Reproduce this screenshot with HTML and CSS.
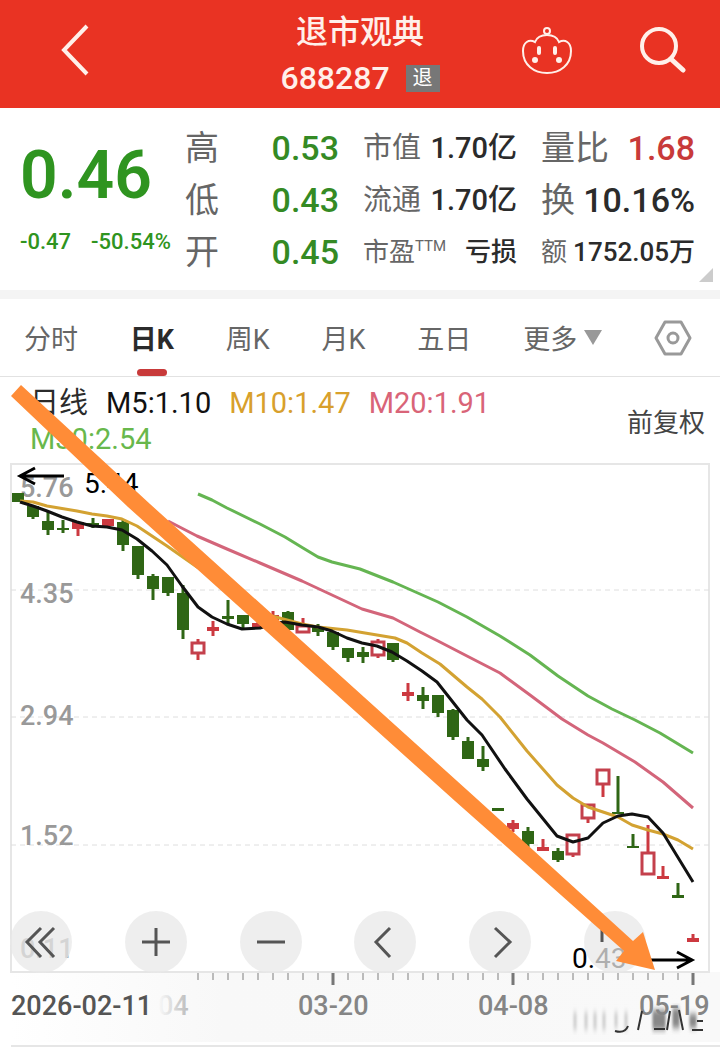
FILE: index.html
```
<!DOCTYPE html>
<html lang="zh-CN">
<head>
    <meta charset="UTF-8">
    <meta name="viewport" content="width=device-width, initial-scale=1.0">
    <title>退市观典 688287</title>
    <link rel="stylesheet" href="styles.css">
</head>
<body>
    <header class="topbar">
        <button class="icon-button back" aria-label="返回">
            <svg width="30" height="54" viewBox="0 0 30 54"><path d="M27 3 4 27l23 24" fill="none" stroke="#fff0ea" stroke-width="4"/></svg>
        </button>
        <div class="stock">
            <h1 class="stock-name">退市观典</h1>
            <div class="stock-code">688287 <span class="tag">退</span></div>
        </div>
        <div class="tools">
            <button class="icon-button" aria-label="助手">
                <svg width="52" height="50" viewBox="0 0 52 50" fill="none" stroke="#fff0ea" stroke-width="2">
                    <circle cx="27" cy="6" r="3"/>
                    <path d="M27 10c-6 0-10 2-12 7-6-3-12 0-12 9 0 14 11 22 24 22s24-8 24-22c0-9-6-12-12-9-2-5-6-7-12-7z"/>
                    <path d="M19 23v5M35 23v5" stroke-width="4" stroke-linecap="round"/>
                    <circle cx="15" cy="35" r="3" fill="#fff0ea" stroke="none"/>
                    <circle cx="39" cy="35" r="3" fill="#fff0ea" stroke="none"/>
                </svg>
            </button>
            <button class="icon-button" aria-label="搜索">
                <svg width="46" height="46" viewBox="0 0 46 46" fill="none" stroke="#fff0ea" stroke-width="4">
                    <circle cx="19" cy="19" r="17"/>
                    <path d="m31 32 12 11" stroke-width="5" stroke-linecap="round"/>
                </svg>
            </button>
        </div>
    </header>

    <section class="quote">
        <div class="price">
            <div class="price-now">0.46</div>
            <div class="price-change"><span>-0.47</span><span>-50.54%</span></div>
        </div>
        <dl class="stats">
            <div class="large"><dt>高</dt><dd class="down">0.53</dd></div>
            <div class="large"><dt>低</dt><dd class="down">0.43</dd></div>
            <div class="large"><dt>开</dt><dd class="down">0.45</dd></div>
            <div class="medium"><dt>市值</dt><dd>1.70亿</dd></div>
            <div class="medium"><dt>流通</dt><dd>1.70亿</dd></div>
            <div class="small"><dt>市盈<sup>TTM</sup></dt><dd>亏损</dd></div>
            <div class="large"><dt>量比</dt><dd class="up">1.68</dd></div>
            <div class="large"><dt>换</dt><dd>10.16%</dd></div>
            <div class="small"><dt>额</dt><dd>1752.05万</dd></div>
        </dl>
        <span class="corner"></span>
    </section>

    <nav class="tabs">
        <button class="tab">分时</button>
        <button class="tab active">日K</button>
        <button class="tab">周K</button>
        <button class="tab">月K</button>
        <button class="tab">五日</button>
        <button class="tab more">更多<span class="caret"></span></button>
        <button class="icon-button settings" aria-label="设置">
            <svg width="38" height="36" viewBox="0 0 38 36" fill="none" stroke="#999" stroke-width="3">
                <path d="M11 2h16l9 16-9 16H11L2 18z" stroke-linejoin="round"/>
                <circle cx="19" cy="18" r="5"/>
            </svg>
        </button>
    </nav>

    <main class="chart">
        <div class="legend">
            <div class="averages">
                <span>日线</span>
                <span class="m5">M5:1.10</span>
                <span class="m10">M10:1.47</span>
                <span class="m20">M20:1.91</span>
                <span class="m30">M30:2.54</span>
            </div>
            <button class="adjust">前复权</button>
        </div>

        <svg class="plot" viewBox="0 458 720 590">
            <defs>
                <linearGradient id="axisShade" x1="0" y1="0" x2="1" y2="0">
                    <stop offset="0" stop-color="#fff"/>
                    <stop offset="0.3" stop-color="#f8f8f8"/>
                    <stop offset="1" stop-color="#f9f9f9"/>
                </linearGradient>
                <linearGradient id="labelFade" x1="0" y1="0" x2="1" y2="0">
                    <stop offset="0" stop-color="#bbb" stop-opacity="0"/>
                    <stop offset="1" stop-color="#bbb"/>
                </linearGradient>
                <filter id="smear" x="-10%" y="-20%" width="120%" height="140%">
                    <feGaussianBlur stdDeviation="1 3"/>
                </filter>
            </defs>

            <rect x="11" y="972" width="709" height="70" fill="url(#axisShade)"/>
            <rect class="frame" x="11" y="464" width="698" height="508"/>
            <path class="grid" d="M11 590H709M11 717H709M11 845H709"/>
            <path class="frame" d="M11 1046H720"/>

            <g class="scale">
                <text x="20" y="497">5.76</text>
                <text x="20" y="603">4.35</text>
                <text x="20" y="725">2.94</text>
                <text x="20" y="845">1.52</text>
                <text x="20" y="958">0.11</text>
            </g>

            <!-- falling days -->
            <path class="body fall" d="M18 493V502M33 506V517M48 521V530M63 528V530M93 523V526M123 522V545M138 546V575M153 576V589M168 577V593M183 593V630M228 616V619M243 615V624M288 612V630M318 627V632M333 632V647M348 648V658M363 652V657M393 643V660M423 695V701M438 695V713M453 710V737M468 741V759M483 759V767M498 808V811M528 831V844M558 851V860M618 812V814M633 846V848M678 895V898"/>
            <path class="wick fall" d="M33 506V519M48 511V535M63 520V533M93 518V528M123 520V551M138 546V579M153 574V600M168 577V596M183 585V639M228 600V625M243 615V628M288 611V630M318 624V636M333 632V650M348 648V662M363 647V663M393 643V662M423 687V709M438 695V717M453 709V740M468 737V759M483 746V771M528 827V847M558 848V862M618 776V814M633 834V847M678 883V897"/>
            <!-- rising days -->
            <path class="body rise" d="M78 522V529M108 519V526M213 627V631M258 623V628M273 615V620M408 692V696M513 823V829M543 847V851M663 876V879M693 938V942"/>
            <path class="wick rise" d="M78 529V536M198 639V642M198 653V660M213 621V636M258 615V626M273 611V620M303 618V625M378 639V641M378 655V658M408 683V701M513 820V832M543 839V851M573 854V857M588 818V823M603 784V797M648 825V853M663 866V878M693 934V941"/>
            <path class="hollow" d="M192 643h12v10h-12zM297 626h12v6h-12zM372 642h12v13h-12zM567 835h12v19h-12zM582 805h12v13h-12zM597 770h12v14h-12zM642 853h12v21h-12z"/>

            <polyline class="line m30" points="198,494 212,500 227,508 260,524 285,537 303,548 318,557 332,562 360,569 393,582 438,602 467,617 500,636 530,655 558,676 588,696 612,709 635,720 660,733 693,753"/>
            <polyline class="line m20" points="168,521 197,536 227,549 260,563 302,581 332,595 362,609 393,618 420,632 438,641 467,656 500,673 530,695 562,719 588,735 603,743 635,762 663,782 693,808"/>
            <polyline class="line m10" points="20,501 33,502 47,506 77,511 92,514 107,516 122,519 137,526 167,546 197,567 220,581 245,600 272,616 302,624 318,627 347,630 377,635 395,638 407,643 422,653 440,664 467,687 482,699 500,717 527,751 557,785 573,798 588,807 603,812 618,817 632,825 648,830 663,834 678,840 693,849"/>
            <polyline class="line m5" points="20,502 33,506 47,511 62,517 77,522 92,526 107,527 122,530 137,539 152,551 167,565 182,586 198,607 212,617 227,624 242,629 260,628 275,623 285,622 302,625 318,627 332,631 347,638 362,643 377,646 392,652 407,661 422,671 437,682 452,701 467,720 482,735 505,769 527,799 557,836 573,842 588,838 603,823 618,816 632,814 648,817 663,833 693,882"/>

            <!-- period high and low -->
            <g class="extreme">
                <path d="M64 476H20M35 468 20 476l15 8M636 960H692M677 952l15 8-15 8"/>
                <text x="84" y="493">5.44</text>
                <text x="572" y="968">0.43</text>
            </g>

            <path class="ticks" d="M198 973v7M213 973v7M228 973v7M243 973v7M258 973v7M273 973v7M288 973v7M303 973v7M318 973v7M348 973v7M363 973v7M378 973v7M393 973v7M408 973v7M423 973v7M438 973v7M453 973v7M468 973v7M483 973v7M498 973v7M528 973v7M543 973v7M558 973v7M573 973v7M588 973v7M603 973v7M618 973v7M633 973v7M648 973v7M663 973v7M678 973v7"/>
            <path class="ticks major" d="M333 973v12M513 973v12M693 973v12"/>
            <g class="dates">
                <text class="start" x="11" y="1015">2026-02-11</text>
                <text x="158" y="1015" fill="url(#labelFade)">04</text>
                <text x="298" y="1015">03-20</text>
                <text x="478" y="1015">04-08</text>
                <text x="639" y="1015">05-19</text>
            </g>

            <!-- smudge over the last date -->
            <g fill="none">
                <g filter="url(#smear)">
                    <path d="M575 1012v18M586 1012v18M595 1012v18M604 1012v18M616 1012v16M626 1012v18" stroke="#ccc" stroke-width="3"/>
                    <path d="M656 1010v20M662 1010v20M676 1008v20M693 1014v14" stroke="#888" stroke-width="7"/>
                </g>
                <path d="M642 1011 638 1030M670 1011 667 1030M679 1010l4 20M654 1029h11M692 1030h11M697 1021h6M615 1031q10 3 13-5" stroke="#333" stroke-width="2"/>
            </g>
        </svg>

        <div class="controls">
            <button class="round" aria-label="最早"><svg viewBox="0 0 62 62"><path d="M31 17 17 31l14 15M44 17 30 31l14 15"/></svg></button>
            <button class="round" aria-label="放大"><svg viewBox="0 0 62 62"><path d="M17 31h28M31 17v28"/></svg></button>
            <button class="round" aria-label="缩小"><svg viewBox="0 0 62 62"><path d="M17 31h28"/></svg></button>
            <button class="round" aria-label="左移"><svg viewBox="0 0 62 62"><path d="M36 17 22 31l14 15"/></svg></button>
            <button class="round" aria-label="右移"><svg viewBox="0 0 62 62"><path d="M26 17l15 14-15 15"/></svg></button>
            <button class="round" aria-label="全屏"><svg viewBox="0 0 62 62"><path d="M18 19v12"/></svg></button>
        </div>

        <svg class="trend" viewBox="0 377 720 671">
            <polygon points="21,385 150,504 477,799 633,941 643,932 655,970 616,961 624,951 455,801 128,507 11,396" fill="#ff8c37"/>
        </svg>
    </main>
</body>
</html>
```
FILE: styles.css
```
* {
    box-sizing: border-box;
}

body {
    margin: 0;
    background-color: #fff;
    font-family: Roboto, "Noto Sans CJK SC", sans-serif;
    color: #2b2b2b;
}

button {
    padding: 0;
    border: none;
    background: none;
    font-family: inherit;
    color: inherit;
    cursor: pointer;
}

svg {
    display: block;
}

.topbar {
    display: grid;
    grid-template-columns: 1fr auto 1fr;
    align-items: center;
    height: 108px;
    padding: 0 34px 8px;
    background-color: #e93323;
    color: #fff0ea;
}

.back {
    justify-self: start;
    margin-left: 26px;
}

.stock {
    padding-top: 8px;
    text-align: center;
}

.stock-name {
    margin: 0;
    font-size: 32px;
    font-weight: 500;
    line-height: 48px;
}

.stock-code {
    display: flex;
    align-items: center;
    justify-content: center;
    gap: 16px;
    font-size: 32px;
    font-weight: 500;
    line-height: 44px;
}

.tag {
    padding: 0 7px;
    background-color: #777;
    color: #fff;
    font-size: 20px;
    font-weight: 400;
    line-height: 27px;
}

.tools {
    display: flex;
    justify-content: flex-end;
    align-items: center;
    gap: 68px;
}

.quote {
    position: relative;
    display: flex;
    padding: 14px 25px 12px 20px;
    border-bottom: 9px solid #f4f4f4;
}

.price {
    flex: 0 0 165px;
    padding-top: 16px;
    color: #2f9420;
}

.price-now {
    font-size: 66px;
    font-weight: 600;
    line-height: 76px;
}

.price-change {
    display: flex;
    gap: 20px;
    padding-top: 12px;
    font-size: 22px;
    font-weight: 500;
    line-height: 32px;
}

.stats {
    flex: 1;
    display: grid;
    grid-template-columns: repeat(3, 1fr);
    grid-template-rows: repeat(3, 52px);
    grid-auto-flow: column;
    column-gap: 24px;
    margin: 0;
    line-height: 52px;
}

.stats div {
    display: flex;
    align-items: baseline;
    justify-content: space-between;
    white-space: nowrap;
}

.stats dt {
    color: #666;
}

.stats dd {
    margin: 0;
    font-weight: 500;
}

.stats .large {
    font-size: 34px;
}

.stats .medium {
    font-size: 29px;
}

.stats .small {
    font-size: 26px;
}

.stats sup {
    font-size: 15px;
    line-height: 0;
}

.stats .down {
    color: #348a24;
}

.stats .up {
    color: #c83a3a;
}

.corner {
    position: absolute;
    right: 7px;
    bottom: 8px;
    border-left: 14px solid transparent;
    border-bottom: 14px solid #ccc;
}

.tabs {
    display: flex;
    align-items: center;
    justify-content: space-between;
    height: 78px;
    padding: 0 28px 0 24px;
    border-bottom: 1px solid #e2e2e2;
}

.tab {
    position: relative;
    height: 77px;
    font-size: 27px;
    color: #666;
}

.tab.active {
    font-weight: 700;
    color: #2b2b2b;
}

.tab.active::after {
    content: "";
    position: absolute;
    left: 50%;
    bottom: 0;
    width: 30px;
    height: 7px;
    margin-left: -15px;
    border-radius: 4px;
    background-color: #c83a3a;
}

.more {
    display: flex;
    align-items: center;
    gap: 7px;
}

.caret {
    border: 9px solid transparent;
    border-top: 15px solid #999;
    border-bottom: none;
}

.chart {
    position: relative;
}

.legend {
    display: flex;
    align-items: center;
    justify-content: space-between;
    height: 81px;
    padding: 6px 15px 0 30px;
}

.averages {
    display: flex;
    flex-wrap: wrap;
    flex: 0 1 480px;
    column-gap: 18px;
    font-size: 29px;
    line-height: 36px;
}

.averages .m5 {
    color: #111;
}

.averages .m10 {
    color: #d8a02c;
}

.averages .m20 {
    color: #d96478;
}

.averages .m30 {
    color: #68b84c;
}

.adjust {
    font-size: 26px;
    color: #444;
}

.plot {
    width: 100%;
    height: auto;
}

.plot text {
    font-size: 28px;
}

.frame {
    fill: none;
    stroke: #e6e6e6;
    stroke-width: 2;
}

.grid {
    stroke: #dedede;
    stroke-width: 1;
    stroke-dasharray: 5 4;
}

.plot .scale text {
    fill: #999;
    font-size: 27px;
    font-weight: 500;
}

.body {
    stroke-width: 12;
}

.wick {
    stroke-width: 3;
}

.fall {
    stroke: #2f6615;
}

.rise {
    stroke: #cc3940;
}

.hollow {
    fill: #fff;
    stroke: #c4404c;
    stroke-width: 3;
}

.line {
    fill: none;
    stroke-width: 3;
    stroke-linejoin: round;
}

.line.m5 {
    stroke: #111;
}

.line.m10 {
    stroke: #d3a232;
}

.line.m20 {
    stroke: #d3657a;
}

.line.m30 {
    stroke: #65b552;
}

.extreme path {
    fill: none;
    stroke: #000;
    stroke-width: 3;
}

.ticks {
    stroke: #bbb;
    stroke-width: 2;
}

.ticks.major {
    stroke: #777;
    stroke-width: 3;
}

.plot .dates text {
    font-size: 27px;
    font-weight: 500;
}

.dates {
    fill: #858585;
}

.dates .start {
    fill: #555;
}

.controls {
    position: absolute;
    left: 10px;
    right: 74px;
    bottom: 75px;
    display: flex;
    justify-content: space-between;
}

.round {
    width: 62px;
    height: 62px;
    border-radius: 50%;
    background-color: rgba(232, 232, 232, 0.75);
}

.round path {
    fill: none;
    stroke: #555;
    stroke-width: 3;
}

.trend {
    position: absolute;
    left: 0;
    bottom: 0;
    width: 100%;
    pointer-events: none;
}
```
